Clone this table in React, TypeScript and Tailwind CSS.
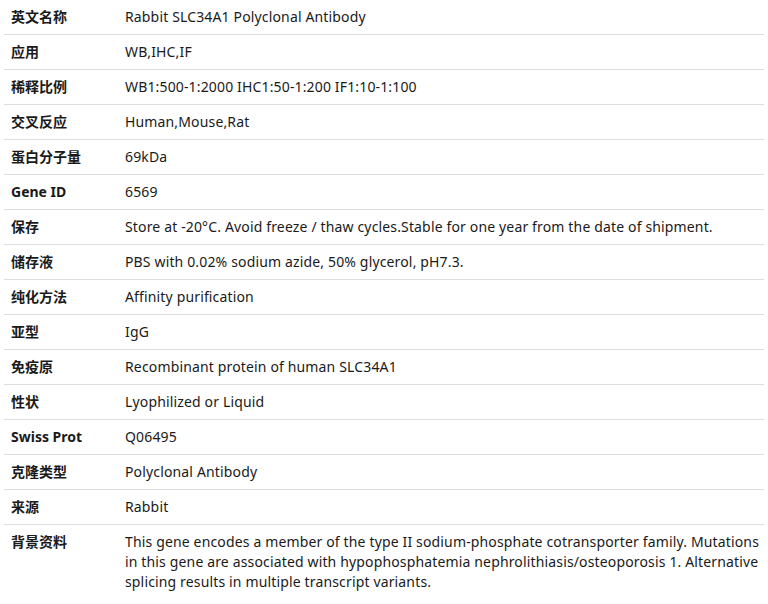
const rows: [string, string][] = [
  ["英文名称", "Rabbit SLC34A1 Polyclonal Antibody"],
  ["应用", "WB,IHC,IF"],
  ["稀释比例", "WB1:500-1:2000 IHC1:50-1:200 IF1:10-1:100"],
  ["交叉反应", "Human,Mouse,Rat"],
  ["蛋白分子量", "69kDa"],
  ["Gene ID", "6569"],
  ["保存", "Store at -20°C. Avoid freeze / thaw cycles.Stable for one year from the date of shipment."],
  ["储存液", "PBS with 0.02% sodium azide, 50% glycerol, pH7.3."],
  ["纯化方法", "Affinity purification"],
  ["亚型", "IgG"],
  ["免疫原", "Recombinant protein of human SLC34A1"],
  ["性状", "Lyophilized or Liquid"],
  ["Swiss Prot", "Q06495"],
  ["克隆类型", "Polyclonal Antibody"],
  ["来源", "Rabbit"],
  [
    "背景资料",
    "This gene encodes a member of the type II sodium-phosphate cotransporter family. Mutations in this gene are associated with hypophosphatemia nephrolithiasis/osteoporosis 1. Alternative splicing results in multiple transcript variants.",
  ],
];

export default function App() {
  return (
    <div className="w-[768px] h-[604px] bg-white px-[4px] overflow-hidden font-['Noto_Sans','Noto_Sans_CJK_SC',sans-serif] text-[14px] leading-5 text-[#1a1a1a]">
      <table className="w-full border-collapse">
        <tbody>
          {rows.map(([label, value], i) => (
            <tr key={label} className={i < rows.length - 1 ? "border-b border-[#dddddd]" : ""}>
              <td className="w-[114px] align-top pl-[7px] pr-[4px] py-[7px] font-bold">{label}</td>
              <td className="align-top pl-[7px] pr-[2px] py-[7px] tracking-[0.15px]">{value}</td>
            </tr>
          ))}
        </tbody>
      </table>
    </div>
  );
}
